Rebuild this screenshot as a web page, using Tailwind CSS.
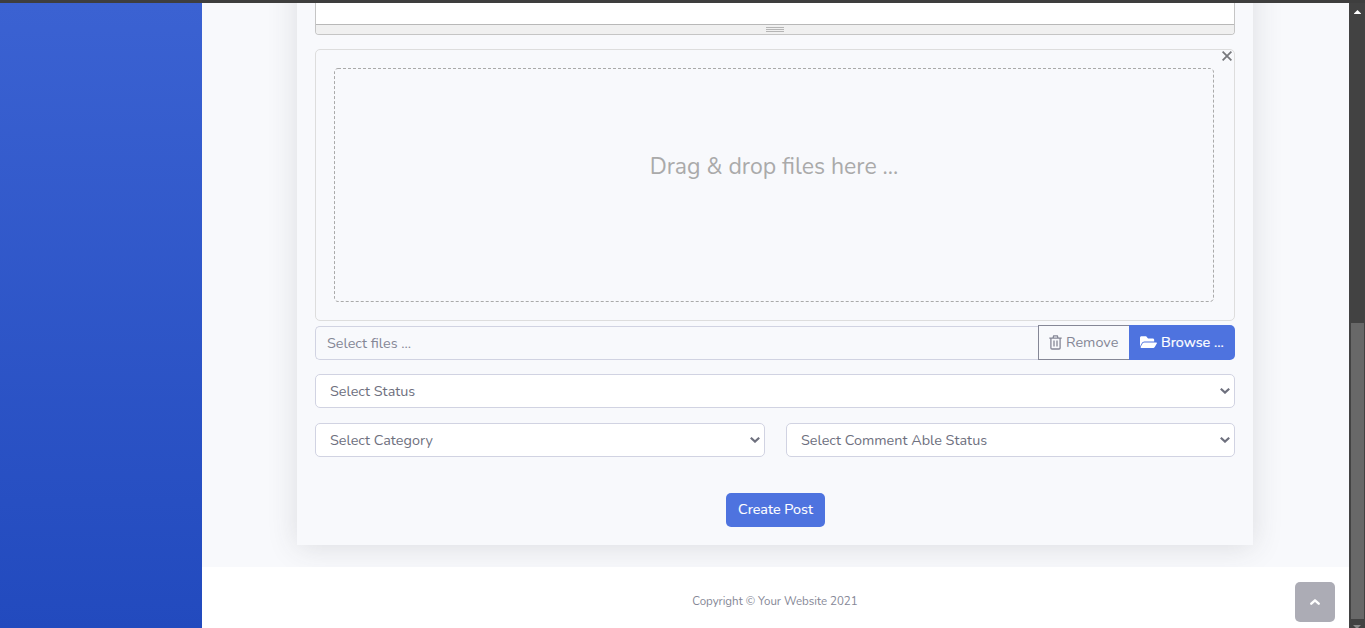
<!DOCTYPE html>
<html lang="en">
<head>
<meta charset="utf-8">
<title>Create Post</title>
<script src="https://cdn.jsdelivr.net/npm/@tailwindcss/browser@4"></script>
</head>
<body class="flex h-[628px] w-[1365px] flex-col overflow-hidden bg-[#f8f9fc] font-[Nunito,Lato,sans-serif] text-[14.4px] leading-[21px] text-[#6e707e]">
<div class="h-[3px] shrink-0 bg-[#3e3e3e]"></div>
<div class="flex min-h-0 flex-1">
  <aside class="w-[202px] shrink-0 bg-linear-to-b from-[#3b62d2] to-[#224abe]"></aside>
  <div class="flex w-[1147px] shrink-0 flex-col overflow-hidden">
    <main class="flex h-[564px] shrink-0 overflow-hidden pl-[95px]">
      <form class="-mt-10 flex h-[582px] w-[956px] flex-col px-[18px] pt-10 shadow-[0_2.4px_28px_rgba(58,59,69,0.15)]">
        <div class="h-8 w-full shrink-0 rounded-b-[4px] border border-t-0 border-[#c5c5c5] bg-white">
          <div class="mt-[21px] flex h-[10px] flex-col items-center gap-px rounded-b-[3px] border-t border-[#b8b8b8] bg-[#f0f0f0] pt-[2px]">
            <i class="h-px w-[18px] bg-[#b5b5b5]"></i><i class="h-px w-[18px] bg-[#b5b5b5]"></i><i class="h-px w-[18px] bg-[#b5b5b5]"></i>
          </div>
        </div>
        <div class="relative mt-[14px] h-[272px] w-full shrink-0 rounded-[5px] border border-[#dddddd] px-[18px] pt-[18px]">
          <svg class="absolute top-[1px] right-[2px] h-[10px] w-[10px]" viewBox="0 0 10 10" fill="none" stroke="#77787d" stroke-width="1.8"><path d="M.6.6 9.4 9.4M9.4.6.6 9.4"/></svg>
          <div class="relative h-[234px] w-[880px] text-center">
            <svg class="absolute inset-0" width="880" height="234" fill="none"><rect x=".5" y=".5" width="879" height="233" rx="3.5" stroke="#aaaaaa" stroke-dasharray="3 2"/></svg>
            <p class="pt-[84px] text-[23.04px] leading-[30px] text-[#aaaaaa]">Drag &amp; drop files here ...</p>
          </div>
        </div>
        <div class="mt-1 flex h-[35px] w-full shrink-0 items-end">
          <div class="flex h-[34px] flex-1 items-center rounded-l-[5px] border border-r-0 border-[#d1d3e2] pl-[11px] text-[#858796]">Select files ...</div>
          <button type="button" class="flex h-[35px] w-[91px] items-center border border-r-0 border-[#858796] pl-[10px] text-[#858796]">
            <svg class="mr-[4px] h-[15px] w-[13px]" viewBox="0 0 13 15" fill="none" stroke="currentColor" stroke-width="1.3"><path d="M.3 3.2h12.4M4 3l.7-2.2h3.6L9 3M1.9 3.2v9.7q0 1.1 1.1 1.1h7q1.1 0 1.1-1.1V3.2M5 5.4v6M8 5.4v6"/></svg>Remove
          </button>
          <button type="button" class="flex h-[35px] w-[106px] items-center rounded-r-[5px] bg-[#4e73df] pl-[11px] text-white [-webkit-text-stroke:0.2px_white]">
            <svg class="mr-[3px] mb-px h-[12px] w-[17px]" viewBox="0 50 576 402" preserveAspectRatio="none" fill="currentColor"><path d="M573 295l-73 124a48 48 0 0 1-41 29H44c-18 0-30-20-21-36l73-124a48 48 0 0 1 41-24h415c18 0 30 15 21 31zM144 232h336v-48c0-27-22-48-48-48H272l-64-76H48c-26 0-48 22-48 48v290l69-118a88 88 0 0 1 75-48z"/></svg><span class="ml-px">Browse ...</span>
          </button>
        </div>
        <div class="mt-[14px] flex h-[34px] w-full shrink-0 items-center justify-between rounded-[5px] border border-[#d1d3e2] bg-white pr-[4px] pl-[14px]">
          Select Status
          <svg class="h-[6px] w-[10px]" viewBox="0 0 10 6" fill="none" stroke="#6e707e" stroke-width="2.2"><path d="M.8.8 5 4.6 9.2.8"/></svg>
        </div>
        <div class="mt-[15px] flex h-[34px] w-full shrink-0 gap-[21px]">
          <div class="flex w-[450px] items-center justify-between rounded-[5px] border border-[#d1d3e2] bg-white pr-[4px] pl-[14px]">
            Select Category
            <svg class="h-[6px] w-[10px]" viewBox="0 0 10 6" fill="none" stroke="#6e707e" stroke-width="2.2"><path d="M.8.8 5 4.6 9.2.8"/></svg>
          </div>
          <div class="flex w-[449px] items-center justify-between rounded-[5px] border border-[#d1d3e2] bg-white pr-[4px] pl-[14px]">
            Select Comment Able Status
            <svg class="h-[6px] w-[10px]" viewBox="0 0 10 6" fill="none" stroke="#6e707e" stroke-width="2.2"><path d="M.8.8 5 4.6 9.2.8"/></svg>
          </div>
        </div>
        <button type="button" class="mt-[36px] ml-[411px] h-[34px] w-[99px] shrink-0 rounded-[5px] bg-[#4e73df] pb-[2px] text-white [-webkit-text-stroke:0.1px_white]">Create Post</button>
      </form>
    </main>
    <footer class="relative flex flex-1 items-center justify-center bg-white text-[11.52px] text-[#858796]">
      <span class="mt-[7px] mr-px">Copyright © Your Website 2021</span>
      <a class="absolute right-[14px] bottom-[6px] flex h-10 w-10 items-center justify-center rounded-[5px] bg-[#acacb5]">
        <svg class="h-[6px] w-[10px]" viewBox="0 0 10 6" fill="none" stroke="#fff" stroke-width="2.4" stroke-linecap="round" stroke-linejoin="round"><path d="M1.3 4.7 5 1.3 8.7 4.7"/></svg>
      </a>
    </footer>
  </div>
  <div class="flex w-4 shrink-0 flex-col items-center bg-[#424242]">
    <svg class="mt-[7px] h-1 w-[7px] shrink-0" viewBox="0 0 7 4" fill="#fff"><path d="M0 4V3.4L3.5 0 7 3.4V4z"/></svg>
    <div class="mt-[309px] ml-px h-[296px] w-[13px] shrink-0 bg-[#686868]"></div>
    <svg class="mt-[6px] h-[4px] w-[8px] shrink-0" viewBox="0 0 8 4" fill="#8a8a8a"><path d="M0 0h8L4 4z"/></svg>
  </div>
</div>
</body>
</html>
